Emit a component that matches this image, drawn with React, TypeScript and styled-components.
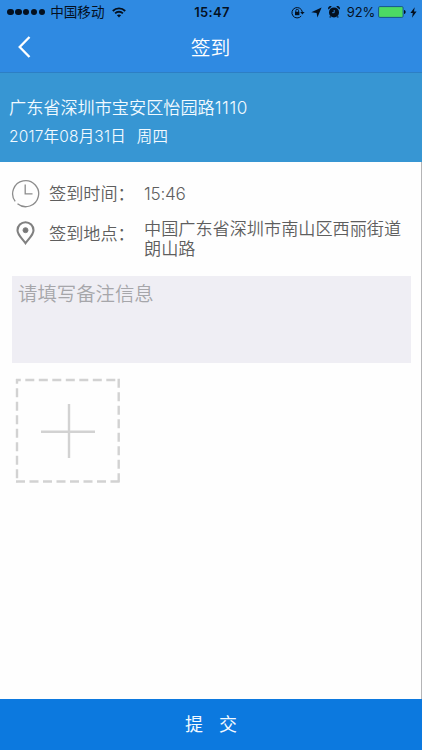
import React from "react";
import styled, { createGlobalStyle } from "styled-components";

const Global = createGlobalStyle`
  *, *::before, *::after { box-sizing: border-box; }
  body { margin: 0; background: #fff; }
  p, h1 { margin: 0; font-weight: inherit; }
  svg { display: block; flex: none; }
`;

const Screen = styled.div`
  width: 422px;
  height: 750px;
  display: flex;
  flex-direction: column;
  overflow: hidden;
  background: #fefefe;
  font-family: Inter, "Noto Sans CJK SC", sans-serif;
  font-weight: 350;
  white-space: nowrap;
  box-shadow: inset -1px 0 #b4b4b6;
`;

const TopBar = styled.header`
  width: 422px;
  height: 73px;
  flex: none;
  background: #2f8ae2;
  border-bottom: 1px solid #2d7fc4;
`;

const StatusBar = styled.div`
  height: 24px;
  display: grid;
  grid-template-columns: 1fr auto 1fr;
  align-items: center;
  padding: 0 5px 0 7px;
  color: #04101f;
  font-size: 13px;
  font-weight: 400;
  line-height: 24px;
`;

const StatusGroup = styled.div<{ $end?: boolean }>`
  display: flex;
  align-items: center;
  justify-content: ${(p) => (p.$end ? "flex-end" : "flex-start")};
`;

const Signal = styled.div`
  display: flex;
  gap: 1.2px;
  margin-right: 5px;
`;

const Dot = styled.i`
  width: 6.7px;
  height: 6.7px;
  border-radius: 50%;
  background: #04101f;
`;

const Carrier = styled.span`
  font-size: 13.6px;
  margin-right: 7px;
`;

const Clock = styled.span`
  font-size: 13px;
  font-weight: 600;
  letter-spacing: 0.35px;
`;

const Percent = styled.span`
  font-size: 13px;
  letter-spacing: -0.2px;
  margin: 0 3px 0 7px;
`;

const NavBar = styled.div`
  height: 48px;
  display: grid;
  grid-template-columns: 48px 1fr 49px;
  align-items: center;
  color: #fff;
`;

const Back = styled.button`
  height: 48px;
  padding: 0 0 3px 18px;
  border: 0;
  background: none;
  color: inherit;
`;

const Title = styled.h1`
  font-size: 19.8px;
  line-height: 46px;
  text-align: center;
`;

const Banner = styled.section`
  width: 422px;
  height: 89px;
  flex: none;
  padding: 21px 9px 0;
  background: #3796d3;
  color: #f2faff;
`;

const Place = styled.p`
  font-size: 17.15px;
  line-height: 28px;
`;

const HouseNumber = styled.span`
  letter-spacing: 0.6px;
`;

const Day = styled.p`
  font-size: 15.5px;
  line-height: 29px;
  letter-spacing: 0.18px;
  word-spacing: 0.9px;
  white-space: pre;
`;

const Details = styled.section`
  height: 114px;
  padding: 16px 11px 0;
  flex: none;
  color: #5e5e5e;
  font-size: 17.15px;
`;

const Detail = styled.div<{ $height: number }>`
  height: ${(p) => p.$height}px;
  display: grid;
  grid-template-columns: 38px 95px 1fr;
  align-items: start;
`;

const IconSlot = styled.div`
  height: 30px;
  width: 29px;
  display: flex;
  align-items: center;
  justify-content: center;
`;

const Label = styled.span`
  line-height: 31px;
`;

const Time = styled.span`
  line-height: 31px;
  letter-spacing: -0.25px;
`;

const Address = styled.span`
  line-height: 20px;
  padding-top: 1px;
`;

const Notes = styled.textarea`
  display: block;
  width: 399px;
  height: 87px;
  flex: none;
  margin: 0 0 0 12px;
  padding: 3px 6px;
  border: 0;
  border-radius: 0;
  outline: 0;
  resize: none;
  background: #efeef4;
  color: #666;
  font: 350 19.4px/30px Inter, "Noto Sans CJK SC", sans-serif;
  &::placeholder { color: #a6a6aa; opacity: 1; }
`;

const AddPhoto = styled.button`
  align-self: flex-start;
  margin: 15px 0 0 15px;
  padding: 0;
  border: 0;
  background: none;
`;

const Submit = styled.button`
  width: 422px;
  height: 51px;
  flex: none;
  margin-top: auto;
  border: 0;
  padding: 0;
  background: #0c79df;
  color: #f3faff;
  font: 18px/51px Inter, "Noto Sans CJK SC", sans-serif;
  word-spacing: 11px;
`;

const WifiIcon = () => (
  <svg width="14" height="11" viewBox="0 0 14 11" fill="none" stroke="#04101f" strokeWidth="1.8">
    <path d="M.8 4C4.3.5 9.7.5 13.2 4M3.1 6.4c2.2-2.2 5.6-2.2 7.8 0" />
    <path d="M4.9 8.2c1.2-1.1 3-1.1 4.2 0L7 10.4z" fill="#04101f" stroke="none" />
  </svg>
);

const LockIcon = () => (
  <svg width="14" height="13" viewBox="0 0 14 13" fill="none" stroke="#04101f">
    <path d="M10.2 10A5.2 5.2 0 1 1 11.3 6" strokeWidth="1" />
    <path d="M9.2 6h4.4l-2.2 2.5z" fill="#04101f" stroke="none" />
    <path d="M4.8 6V4.7a1.4 1.4 0 0 1 2.8 0V6" strokeWidth=".9" />
    <rect x="4" y="5.8" width="4.4" height="3.4" fill="#04101f" stroke="none" />
  </svg>
);

const LocationIcon = () => (
  <svg width="11" height="11" viewBox="0 0 11 11">
    <path d="M10.6.4 6.4 10.6 5.6 6 .3 5.2z" fill="#04101f" />
  </svg>
);

const AlarmIcon = () => (
  <svg width="12" height="12" viewBox="0 0 12 12">
    <circle cx="6" cy="6.4" r="5" fill="#04101f" />
    <path d="M.5 3.6A2.3 2.3 0 0 1 3.8.5zM8.2.5a2.3 2.3 0 0 1 3.3 3.1zM2 9.5l-.6 2h1.9zM10 9.5l.6 2H8.7z" fill="#04101f" />
    <path d="M6.2 4v2.7H4.2" fill="none" stroke="#2f8ae2" strokeWidth=".9" />
  </svg>
);

const BatteryIcon = () => (
  <svg width="28" height="12" viewBox="0 0 28 12">
    <rect x=".6" y=".6" width="24.5" height="10.8" rx="1.2" fill="#4cdb64" stroke="#17558f" strokeWidth="1" />
    <path d="M26 4c2.2.3 2.2 3.7 0 4z" fill="#04101f" />
  </svg>
);

const BoltIcon = () => (
  <svg width="7" height="11" viewBox="0 0 7 11">
    <path d="M4.7.3.4 6h2.4L2 10.7 6.6 4.5H4z" fill="#04101f" />
  </svg>
);

const Icons = styled.div`
  display: flex;
  align-items: center;
  gap: 6px;
`;

const Power = styled.div`
  display: flex;
  align-items: center;
  gap: 4px;
`;

export default function App() {
  return (
    <>
      <Global />
      <Screen>
        <TopBar>
          <StatusBar>
            <StatusGroup>
              <Signal>
                {[0, 1, 2, 3, 4].map((n) => (
                  <Dot key={n} />
                ))}
              </Signal>
              <Carrier>中国移动</Carrier>
              <WifiIcon />
            </StatusGroup>
            <Clock>15:47</Clock>
            <StatusGroup $end>
              <Icons>
                <LockIcon />
                <LocationIcon />
                <AlarmIcon />
              </Icons>
              <Percent>92%</Percent>
              <Power>
                <BatteryIcon />
                <BoltIcon />
              </Power>
            </StatusGroup>
          </StatusBar>
          <NavBar>
            <Back aria-label="返回">
              <svg width="13" height="22" viewBox="0 0 13 22" fill="none" stroke="#fff" strokeWidth="2.3">
                <path d="M11.5 1 1.7 11l9.8 10" />
              </svg>
            </Back>
            <Title>签到</Title>
          </NavBar>
        </TopBar>
        <Banner>
          <Place>
            广东省深圳市宝安区怡园路<HouseNumber>1110</HouseNumber>
          </Place>
          <Day>{"2017年08月31日  周四"}</Day>
        </Banner>
        <Details>
          <Detail $height={40}>
            <IconSlot>
              <svg width="29" height="29" viewBox="0 0 29 29" fill="none" stroke="#8c8c8c" strokeWidth="1.3">
                <path d="M4.2 22.4A13 13 0 1 1 6.5 24.8M14.2 5.5v9.4h7.3" />
              </svg>
            </IconSlot>
            <Label>签到时间：</Label>
            <Time>15:46</Time>
          </Detail>
          <Detail $height={50}>
            <IconSlot>
              <svg width="19" height="24" viewBox="0 0 19 24" fill="none" stroke="#808080">
                <path d="M9.5 22.2C6.5 17.8 1.5 14 1.5 9.2a8 8 0 0 1 16 0c0 4.8-5 8.6-8 13z" strokeWidth="2.1" />
                <circle cx="9.5" cy="9.2" r="2.5" fill="#777" strokeWidth="1" />
              </svg>
            </IconSlot>
            <Label>签到地点：</Label>
            <Address>
              中国广东省深圳市南山区西丽街道
              <br />
              朗山路
            </Address>
          </Detail>
        </Details>
        <Notes placeholder="请填写备注信息" />
        <AddPhoto aria-label="添加照片">
          <svg width="106" height="106" viewBox="0 0 106 106" fill="none" stroke="#d2d2d2" strokeWidth="2.4">
            <path d="M1 2h104M2 1v104" strokeDasharray="9 4.5" strokeDashoffset="4.2" />
            <path d="M1 103.5h104M103.7 .8v104" strokeDasharray="9 4.5" />
            <path d="M26 53.7h54M54 26v54" />
          </svg>
        </AddPhoto>
        <Submit>提 交</Submit>
      </Screen>
    </>
  );
}
